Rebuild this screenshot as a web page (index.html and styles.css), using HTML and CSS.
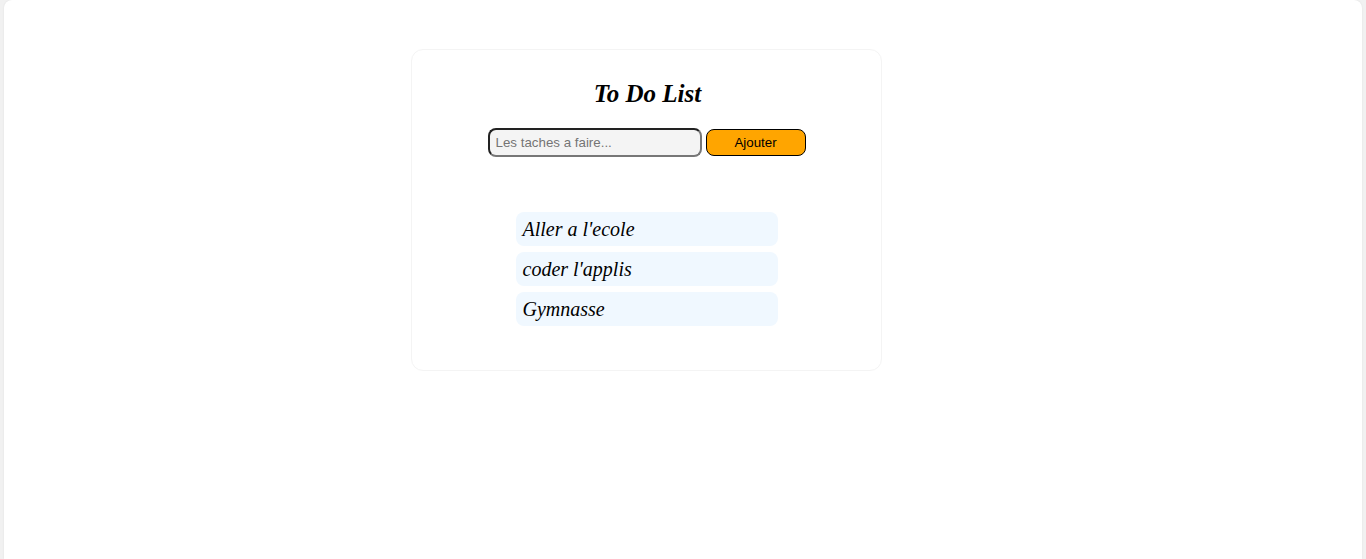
FILE: index.html
```html
<!DOCTYPE html>
<html lang="fr">
<head>
<meta charset="utf-8">
<title>To Do List</title>
<link rel="stylesheet" href="styles.css">
</head>
<body>
<div class="frame">
  <div class="card">
    <h1 class="title">To Do List</h1>
    <div class="form">
      <input class="task-input" type="text" placeholder="Les taches a faire...">
      <button class="add-btn" type="button">Ajouter</button>
    </div>
    <ul class="list">
      <li class="item">Aller a l'ecole</li>
      <li class="item">coder l'applis</li>
      <li class="item">Gymnasse</li>
    </ul>
  </div>
</div>
</body>
</html>
```
FILE: styles.css
```css
html, body {
  margin: 0;
  padding: 0;
  height: 100%;
}
body {
  background: #f1f1f1;
  font-family: "Liberation Serif", "Times New Roman", serif;
  overflow: hidden;
}
.frame {
  margin: 0 4px;
  min-height: 100%;
  background: #ffffff;
  border-radius: 8px 8px 0 0;
  box-shadow: 0 0 2px rgba(0, 0, 0, 0.08);
  padding-top: 49px;
  box-sizing: border-box;
}
.card {
  width: 471px;
  box-sizing: border-box;
  margin-left: 407px;
  border: 1px solid #f4f4f4;
  border-radius: 12px;
  padding: 29px 0 44px;
  background: #ffffff;
}
.title {
  margin: 0;
  padding-left: 2px;
  text-align: center;
  font-size: 25px;
  line-height: 30px;
  font-weight: bold;
  font-style: italic;
  color: #000;
}
.form {
  margin-top: 19px;
  display: flex;
  justify-content: center;
  align-items: center;
  gap: 4px;
}
.task-input {
  width: 214px;
  height: 29px;
  box-sizing: border-box;
  margin: 0;
  padding: 0 6px;
  border: 2px solid;
  border-color: #222 #777 #777 #222;
  border-radius: 8px;
  background: #f4f4f4;
  font-family: "Liberation Sans", Arial, sans-serif;
  font-size: 13.333px;
  color: #000;
  outline: none;
}
.task-input::placeholder {
  color: #757575;
}
.add-btn {
  width: 100px;
  height: 27px;
  box-sizing: border-box;
  margin: 0;
  padding: 0;
  border: 1px solid #000;
  border-radius: 8px;
  background: #ffa500;
  font-family: "Liberation Sans", Arial, sans-serif;
  font-size: 13.333px;
  color: #000;
}
.list {
  list-style: none;
  margin: 55px auto 0;
  padding: 0;
  width: 262px;
  display: flex;
  flex-direction: column;
  gap: 6px;
}
.item {
  background: #f0f8ff;
  border-radius: 8px;
  height: 34px;
  line-height: 35px;
  padding: 0 7px;
  font-size: 20px;
  font-style: italic;
  color: #000;
}
```
